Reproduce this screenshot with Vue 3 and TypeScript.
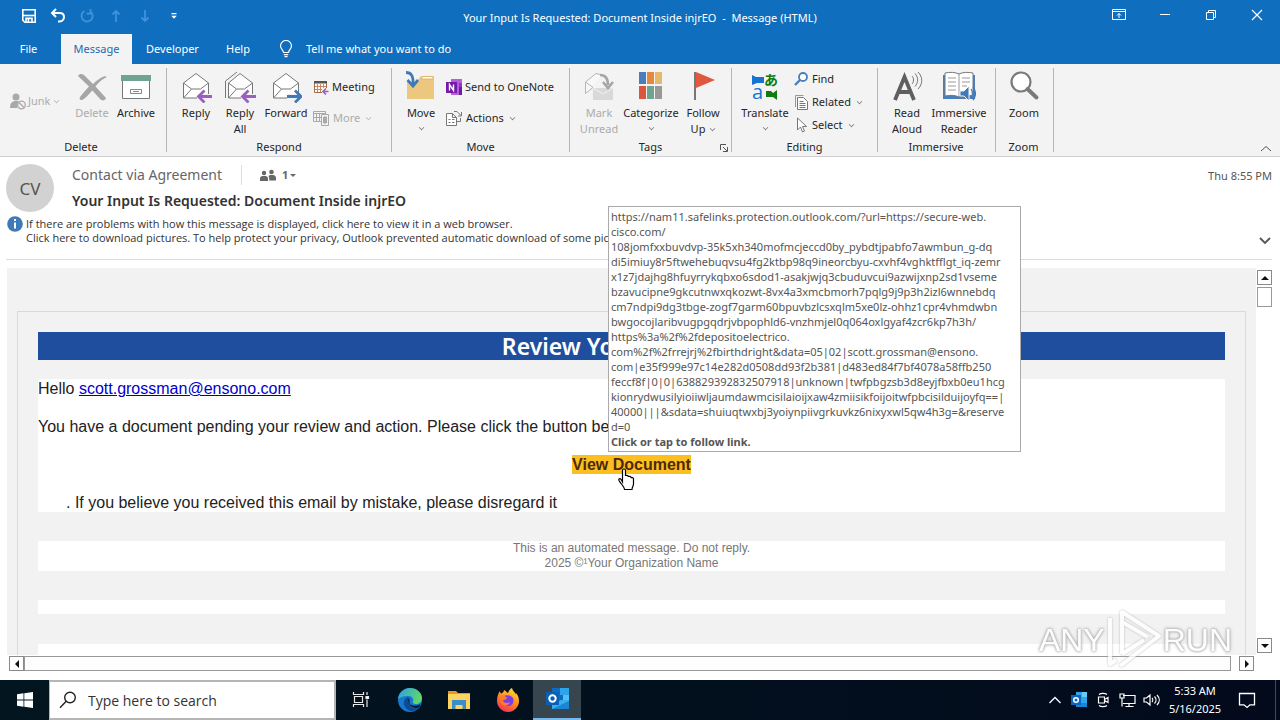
<script setup lang="ts">
import { ref } from 'vue'

const tellMe = ref('')
const search = ref('')

const tooltipLines: string[] = [
  'https://nam11.safelinks.protection.outlook.com/?url=https://secure-web.',
  'cisco.com/',
  '108jomfxxbuvdvp-35k5xh340mofmcjeccd0by_pybdtjpabfo7awmbun_g-dq',
  'di5imiuy8r5ftwehebuqvsu4fg2ktbp98q9ineorcbyu-cxvhf4vghktfflgt_iq-zemr',
  'x1z7jdajhg8hfuyrrykqbxo6sdod1-asakjwjq3cbuduvcui9azwijxnp2sd1vseme',
  'bzavucipne9gkcutnwxqkozwt-8vx4a3xmcbmorh7pqlg9j9p3h2izl6wnnebdq',
  'cm7ndpi9dg3tbge-zogf7garm60bpuvbzlcsxqlm5xe0lz-ohhz1cpr4vhmdwbn',
  'bwgocojlaribvugpgqdrjvbpophld6-vnzhmjel0q064oxlgyaf4zcr6kp7h3h/',
  'https%3a%2f%2fdepositoelectrico.',
  'com%2f%2frrejrj%2fbirthdright&data=05|02|scott.grossman@ensono.',
  'com|e35f999e97c14e282d0508dd93f2b381|d483ed84f7bf4078a58ffb250',
  'feccf8f|0|0|638829392832507918|unknown|twfpbgzsb3d8eyjfbxb0eu1hcg',
  'kionrydwusilyioiiwljaumdawmcisilaioijxaw4zmiisikfoijoitwfpbcisilduijoyfq==|',
  '40000|||&sdata=shuiuqtwxbj3yoiynpiivgrkuvkz6nixyxwl5qw4h3g=&reserve',
  'd=0',
]
</script>

<template>
  <div class="screen">
    <header class="titlebar">
      <div class="caption">
        <div class="qat">
          <button aria-label="Save">
            <svg width="16" height="16" viewBox="0 0 16 16" fill="none" stroke="#fff" stroke-width="1.6">
              <path d="M1.8 1.8h12.4v12.4H3.8l-2-2z" /><path d="M2 7.5h12" /><path d="M5 14v-3.6h6V14M7.4 11v3" />
            </svg>
          </button>
          <button aria-label="Undo">
            <svg width="16" height="16" viewBox="0 0 16 16" fill="none" stroke="#fff" stroke-width="2">
              <path d="M6 1L2 5l4 4M2.4 5h7.2c3 0 4.4 1.8 4.4 4s-1.600 4.400-4.400 4.400H8" />
            </svg>
          </button>
          <button aria-label="Redo">
            <svg width="16" height="16" viewBox="0 0 16 16" fill="none" stroke="#3f92dc" stroke-width="1.800">
              <path d="M5.500 3A5.600 5.600 0 1 0 11 3.200M11.500 1v4.600H7.500" />
            </svg>
          </button>
          <button aria-label="Previous item">
            <svg width="16" height="16" viewBox="0 0 16 16" fill="none" stroke="#3f92dc" stroke-width="1.800">
              <path d="M8 14V3M4.500 6.500L8 3l3.500 3.500" />
            </svg>
          </button>
          <button aria-label="Next item">
            <svg width="16" height="16" viewBox="0 0 16 16" fill="none" stroke="#3f92dc" stroke-width="1.800">
              <path d="M8 2v11M4.500 9.500L8 13l3.500-3.500" />
            </svg>
          </button>
          <button aria-label="Customize toolbar">
            <svg width="8" height="8" viewBox="0 0 8 8" fill="#fff"><path d="M1.500 1h5v1.200h-5zM1.200 3.800h5.600L4 6.800z" /></svg>
          </button>
        </div>
        <h1>Your Input Is Requested: Document Inside injrEO&nbsp; -&nbsp; Message (HTML)</h1>
        <div class="winctl">
          <button aria-label="Ribbon display options">
            <svg width="14" height="12" viewBox="0 0 14 12" fill="none" stroke="#fff"><path d="M.5.5h13v10H.5zM.5 2.500h13M7 9V4.500M5 6.500l2-2 2 2" /></svg>
          </button>
          <button aria-label="Minimize">
            <svg width="12" height="12" viewBox="0 0 12 12" fill="none" stroke="#fff"><path d="M1 5.500h10" /></svg>
          </button>
          <button aria-label="Restore">
            <svg width="12" height="12" viewBox="0 0 12 12" fill="none" stroke="#fff"><path d="M1.500 3.500h7v7h-7zM3.500 3.500v-2h7v7h-2" /></svg>
          </button>
          <button aria-label="Close">
            <svg width="12" height="12" viewBox="0 0 12 12" fill="none" stroke="#fff" stroke-width="1.200"><path d="M1 1l10 10M11 1L1 11" /></svg>
          </button>
        </div>
      </div>
      <nav class="tabs">
        <button class="tab file">File</button>
        <button class="tab message">Message</button>
        <button class="tab developer">Developer</button>
        <button class="tab help">Help</button>
        <label class="tell">
          <svg width="14" height="18" viewBox="0 0 14 18" fill="none" stroke="#fff" stroke-width="1.200">
            <path d="M4.500 12.500c0-2.500-3-3.500-3-6.500a5.500 5.500 0 0 1 11 0c0 3-3 4-3 6.500zM4.800 14.600h4.400M5.500 16.600h3" />
          </svg>
          <input v-model="tellMe" placeholder="Tell me what you want to do" aria-label="Tell me what you want to do" />
        </label>
      </nav>
    </header>

    <section class="ribbon">
      <div class="group g-delete">
        <div class="tools">
          <button class="small junk off">
            <svg width="17" height="17" viewBox="0 0 17 17" fill="#a9a9a9">
              <circle cx="6" cy="4" r="3.500" /><path d="M0 15c0-5 2-7 6-7 2 0 3 .5 3.800 1.200C7 10.500 7 13 7.500 15z" />
              <circle cx="11.500" cy="12" r="3.800" fill="#f2f2f2" stroke="#a9a9a9" stroke-width="1.300" /><path d="M9 9.500l5 5" stroke="#a9a9a9" stroke-width="1.300" />
            </svg>Junk<i class="arrow"></i>
          </button>
          <button class="big w44 off">
            <svg width="32" height="32" viewBox="0 0 32 32" fill="#a6a6a6">
              <path d="M2 5c2-3 5-2 7 0l8 8c4-4 8-7 13-8 .5 1 0 2-1 2-4 2-7 5-9.500 8.500L30 27c-1 3-4 3-6 1l-7.500-8.500C13 23 9 28 6 29c-2 .5-3-1-2-3 3-4 6-7.500 9-10.500z" />
            </svg><span>Delete</span>
          </button>
          <button class="big w44">
            <svg width="32" height="32" viewBox="0 0 32 32">
              <path d="M2.500 9h27v18.500h-27z" fill="#fff" stroke="#777" /><path d="M1 4h30v6H1z" fill="#6fa590" />
              <path d="M10.500 18.500h11v4h-11zM13 20.500h6" fill="none" stroke="#888" />
            </svg><span>Archive</span>
          </button>
        </div>
        <div class="name">Delete</div>
      </div>

      <div class="group g-respond">
        <div class="tools">
          <button class="big w44">
            <svg width="32" height="32" viewBox="0 0 32 32" fill="none">
              <path d="M3.500 12L16 2.500 28.500 12v15h-25z" fill="#fff" stroke="#777" /><path d="M3.500 12l8 6h9l8-6M3.500 27l8-9" stroke="#777" />
              <path d="M17 23h15v8H17z" fill="#f2f2f2" /><path d="M32 25.500H18.500M24.500 19.500l-6 6 6 6" stroke="#9a5fc0" stroke-width="2.800" />
            </svg><span>Reply</span>
          </button>
          <button class="big w44">
            <svg width="32" height="32" viewBox="0 0 32 32" fill="none">
              <path d="M1.500 27V10L13 1" stroke="#777" /><path d="M4.500 12L16 2.500 28.500 12v15h-24z" fill="#fff" stroke="#777" /><path d="M4.500 12l8 6h8l8-6M4.500 27l8-9" stroke="#777" />
              <path d="M17 23h15v8H17z" fill="#f2f2f2" /><path d="M32 25.500H18.500M24.500 19.500l-6 6 6 6" stroke="#9a5fc0" stroke-width="2.800" />
            </svg><span>Reply<br />All</span>
          </button>
          <button class="big w48">
            <svg width="32" height="32" viewBox="0 0 32 32" fill="none">
              <path d="M3.500 12L16 2.500 28.500 12v15h-25z" fill="#fff" stroke="#777" /><path d="M3.500 12l8 6h9l8-6M3.500 27l8-9" stroke="#777" />
              <path d="M17 23h15v8H17z" fill="#f2f2f2" /><path d="M17 25.500h13.500M25 19.500l6 6-6 6" stroke="#3f7ab8" stroke-width="2.800" />
            </svg><span>Forward</span>
          </button>
          <div class="stack two">
            <button class="small">
              <svg width="16" height="16" viewBox="0 0 16 16" fill="none">
                <path d="M1.500 3.500h12v10h-12z" fill="#fff" stroke="#a56a45" /><path d="M1 2h13v2.500H1z" fill="#555" /><path d="M4.500 5v8M7.500 5v8M10.500 5v4M2 7.500h11M2 10.500h7" stroke="#c98a63" />
                <path d="M9 9h7v7H9z" fill="#f2f2f2" /><path d="M15.500 12.500h-5M13 9.500l-3 3 3 3" stroke="#9a5fc0" stroke-width="1.600" />
              </svg>Meeting
            </button>
            <button class="small off">
              <svg width="17" height="16" viewBox="0 0 17 16" fill="none" stroke="#a9a9a9">
                <path d="M.5 1.500h12v10H.5zM.5 3.500h12M3.500 4v7M6.500 4v7M1 7.500h7" /><path d="M8.500 4.500h7v11h-7z" fill="#f2f2f2" /><path d="M10.500 7h3v6h-3z" fill="#a9a9a9" />
              </svg>More<i class="arrow"></i>
            </button>
          </div>
        </div>
        <div class="name">Respond</div>
      </div>

      <div class="group g-move">
        <div class="tools">
          <button class="big w44">
            <svg width="32" height="32" viewBox="0 0 32 32" fill="none">
              <path d="M2 28V11h9l5-6h13v23z" fill="#ecc780" /><path d="M18 5.500h10V8H16z" fill="#fff" stroke="#ddb66c" />
              <path d="M1 1.500c5 0 7.500 3 7 12M2.500 9l5.500 6 5-6" stroke="#3f7ab8" stroke-width="2.800" />
            </svg><span>Move</span><i class="arrow"></i>
          </button>
          <div class="stack two">
            <button class="small">
              <svg width="16" height="16" viewBox="0 0 16 16">
                <path d="M5 0h11v16H5z" fill="#b65fd6" /><path d="M13 4h3v4h-3z" fill="#8c3bc0" /><path d="M13 8h3v8h-3z" fill="#6a1f9c" /><path d="M0 3h11v11H0z" fill="#7719aa" />
                <path d="M3.500 11.500v-6l4 6v-6" fill="none" stroke="#fff" stroke-width="1.400" />
              </svg>Send to OneNote
            </button>
            <button class="small">
              <svg width="17" height="16" viewBox="0 0 17 16" fill="none" stroke="#777">
                <path d="M.5 3.500h6l4 4v8H.5zM6.500 3.500v4h4" fill="#fff" /><path d="M2.500 9.500h2M6 9.500h2.500M2.500 12.500h2M6 12.500h2.500M8 1.500h3l4 4M15.500 2v4H12M11 11.500h3.500V8" />
              </svg>Actions<i class="arrow"></i>
            </button>
          </div>
        </div>
        <div class="name">Move</div>
      </div>

      <div class="group g-tags">
        <div class="tools">
          <button class="big w44 off">
            <svg width="32" height="32" viewBox="0 0 32 32" fill="none" stroke="#b5b5b5">
              <path d="M2.500 22.500V11L13 2.500l6 1.500M2.500 11L10 16.500M2.500 22.500L10 16.500" fill="#f8f8f8" /><path d="M10 17h20v12H10z" fill="#d9d9d9" stroke="none" /><path d="M10 17l10 6 10-6" stroke="#f2f2f2" />
              <path d="M17 4c6 0 8 4 8 10M20 11l5 6 5-6" stroke="#a6a6a6" stroke-width="2.600" />
            </svg><span>Mark<br />Unread</span>
          </button>
          <button class="big w60">
            <svg width="24" height="32" viewBox="0 0 24 32">
              <path d="M0 1h7v12H0z" fill="#4a7ebb" /><path d="M8 1h7v12H8z" fill="#e58a3c" /><path d="M16 1h7v12h-7z" fill="#e5b96e" />
              <path d="M0 15h7v13H0z" fill="#d9573c" /><path d="M8 15h7v13H8z" fill="#6fa590" /><path d="M16 15h7v13h-7z" fill="#999" />
            </svg><span>Categorize</span><i class="arrow"></i>
          </button>
          <button class="big w44">
            <svg width="24" height="32" viewBox="0 0 24 32"><path d="M5 1l19 8-19 8z" fill="#e0593e" /><path d="M3 1h2v28H3z" fill="#777" /></svg>
            <span>Follow<br />Up<i class="arrow inline"></i></span>
          </button>
        </div>
        <div class="name">Tags</div>
        <button class="launcher" aria-label="Tag options">
          <svg width="8" height="8" viewBox="0 0 8 8" fill="none" stroke="#555"><path d="M.5 6V.5H6M3 3l4 4M7.500 3v4.500H3" /></svg>
        </button>
      </div>

      <div class="group g-editing">
        <div class="tools">
          <button class="big w52">
            <svg class="translate" width="28" height="32" viewBox="0 0 28 32" fill="none">
              <path d="M1 4l4 2h8v6H6l-5 2z" fill="#1674d1" /><path d="M26 19v10l-4-3h-7v-6h5l2 2z" fill="#107c10" />
              <text x="1" y="28" class="glyph-a">a</text><text x="13" y="14" class="glyph-jp">あ</text>
            </svg><span>Translate</span><i class="arrow"></i>
          </button>
          <div class="stack three">
            <button class="small">
              <svg width="15" height="15" viewBox="0 0 15 15" fill="none" stroke="#4a7ebb"><circle cx="9" cy="5" r="4" fill="#fff" stroke-width="1.800" /><path d="M6 8l-5 5" stroke-width="2.400" /></svg>Find
            </button>
            <button class="small">
              <svg width="15" height="16" viewBox="0 0 15 16" fill="none"><path d="M1.500 13V1.500h8" stroke="#d08a4a" /><path d="M3.500 3.500h6l4 4v8h-10z" fill="#fff" stroke="#777" /><path d="M5.500 7.500h4M5.500 9.500h6M5.500 11.500h6M5.500 13.500h6" stroke="#777" /></svg>Related<i class="arrow"></i>
            </button>
            <button class="small">
              <svg width="15" height="16" viewBox="0 0 15 16"><path d="M3.500 1v12l3-3 2 5 2-1-2-4.500h4z" fill="#fff" stroke="#777" /></svg>Select<i class="arrow"></i>
            </button>
          </div>
        </div>
        <div class="name">Editing</div>
      </div>

      <div class="group g-immersive">
        <div class="tools">
          <button class="big w46">
            <svg width="32" height="32" viewBox="0 0 32 32" fill="none">
              <path d="M4 29L13.500 6 23 29M7.500 21h12" stroke="#5f5f5f" stroke-width="3.800" />
              <path d="M21 5c2 2 2 6 0 8M24 2.500c3.500 4 3.500 9 0 13M27 1c5 5 5 12 0 17" stroke="#777" />
            </svg><span>Read<br />Aloud</span>
          </button>
          <button class="big w58">
            <svg width="34" height="32" viewBox="0 0 34 32" fill="none">
              <path d="M1 4h32v24H1z" fill="#4a7ebb" /><path d="M3 2c5-1 10-1 14 1 4-2 9-2 14-1v23c-5-1-10-1-14 1-4-2-9-2-14-1z" fill="#fff" stroke="#777" />
              <path d="M17 3v23M6 7h8M6 11h8M6 15h8M6 19h8M20 7h8M20 11h8M20 15h5" stroke="#999" />
              <path d="M18 20h4l5-5v15l-5-5h-4z" fill="#3f7ab8" stroke="#f2f2f2" /><path d="M29 18c2 3 2 6 0 9M31 16c3 4 3 9 0 13" stroke="#3f7ab8" stroke-width="1.300" />
            </svg><span>Immersive<br />Reader</span>
          </button>
        </div>
        <div class="name">Immersive</div>
      </div>

      <div class="group g-zoom">
        <div class="tools">
          <button class="big w46">
            <svg width="32" height="32" viewBox="0 0 32 32" fill="none" stroke="#7a7a7a"><circle cx="13" cy="11" r="9.500" fill="#fff" stroke-width="2.200" /><path d="M19.500 18l9 8.500" stroke-width="4" stroke-linecap="round" /></svg><span>Zoom</span>
          </button>
        </div>
        <div class="name">Zoom</div>
      </div>
      <button class="collapse" aria-label="Collapse ribbon">
        <svg width="12" height="7" viewBox="0 0 12 7" fill="none" stroke="#555"><path d="M1 6l5-4.500L11 6" /></svg>
      </button>
    </section>

    <section class="msghead">
      <div class="who">
        <div class="avatar">CV</div>
        <div class="lines">
          <div class="from">
            <span class="sender">Contact via Agreement</span>
            <button class="people">
              <svg width="16" height="13" viewBox="0 0 16 13" fill="#666">
                <circle cx="4" cy="4" r="2.200" /><path d="M0 12V9.500C0 7.500 1.500 7 4 7s4 .5 4 2.500V12z" /><circle cx="11.500" cy="3" r="2.300" /><path d="M8.500 7c.6-.8 1.600-1 3-1C14 6 16 6.500 16 9v2.500H9.200V9z" />
              </svg><b>1</b><i class="tri"></i>
            </button>
          </div>
          <h2>Your Input Is Requested: Document Inside injrEO</h2>
        </div>
        <time>Thu 8:55 PM</time>
      </div>
      <div class="infobar">
        <svg width="16" height="16" viewBox="0 0 16 16"><circle cx="8" cy="8" r="7.800" fill="#3f7ab8" /><path d="M7 6.500h2v6H7zM7 3h2v2H7z" fill="#fff" /></svg>
        <p>If there are problems with how this message is displayed, click here to view it in a web browser.<br />Click here to download pictures. To help protect your privacy, Outlook prevented automatic download of some pictures in this message.</p>
        <button aria-label="Expand header">
          <svg width="12" height="8" viewBox="0 0 12 8" fill="none" stroke="#555" stroke-width="1.800"><path d="M1 1l5 5 5-5" /></svg>
        </button>
      </div>
    </section>

    <main class="reader">
      <div class="viewport">
        <article class="mail">
          <h3>Review Your Document</h3>
          <div class="sheet letter">
            <p>Hello <a href="#">scott.grossman@ensono.com</a></p>
            <p>You have a document pending your review and action. Please click the button below.</p>
            <p class="cta">
              <a href="#">View Document<svg class="pointer" width="18" height="23" viewBox="0 0 18 23">
                <path d="M5.500 14V2.500c0-2 3-2 3 0V8c0-1 2.800-1 2.800.5V9c0-1 2.800-.8 2.800.6v.6c.2-1 2.400-.8 2.400.8v5c0 2-1.500 3-1.500 5.500H7.500C7.500 19 4 16 2 12.500c-.8-1.500.8-2.500 2-1.200z" fill="#fff" stroke="#000" stroke-width="1.200" />
              </svg></a>
            </p>
            <p class="note">. If you believe you received this email by mistake, please disregard it</p>
          </div>
          <div class="sheet foot">This is an automated message. Do not reply.<br />2025 ©¹Your Organization Name</div>
          <div class="sheet thin"></div>
          <div class="sheet last"></div>
        </article>
      </div>
      <div class="vscroll">
        <button aria-label="Scroll up"><i class="up"></i></button>
        <div class="vthumb"></div>
        <button aria-label="Scroll down"><i class="down"></i></button>
      </div>
    </main>
    <div class="hscroll">
      <button aria-label="Scroll left"><i class="left"></i></button>
      <div class="htrack"></div>
      <button aria-label="Scroll right"><i class="right"></i></button>
    </div>

    <div class="tooltip" role="tooltip">
      <div v-for="line in tooltipLines" :key="line">{{ line }}</div>
      <strong>Click or tap to follow link.</strong>
    </div>

    <div class="watermark">
      <span>ANY</span>
      <svg width="58" height="64" viewBox="0 0 58 64" fill="none" stroke="#fff" stroke-width="4" stroke-linejoin="round">
        <path d="M17 46V4l37 24-39 30M17 14l26 15M5 10v46l6-4M17 46l22-14" />
      </svg>
      <span>RUN</span>
    </div>

    <footer class="taskbar">
      <button class="start" aria-label="Start">
        <svg width="16" height="16" viewBox="0 0 16 16" fill="#fff"><path d="M0 2.200l6.500-.9v6.300H0zM7.300 1.200L16 0v7.600H7.300zM0 8.400h6.500v6.300L0 13.800zM7.300 8.400H16V16l-8.700-1.200z" /></svg>
      </button>
      <label class="search">
        <svg width="18" height="18" viewBox="0 0 18 18" fill="none" stroke="#222" stroke-width="1.400"><circle cx="11" cy="6.500" r="5.300" /><path d="M7.200 10.300L1 16.800" /></svg>
        <input v-model="search" placeholder="Type here to search" aria-label="Type here to search" />
      </label>
      <button class="app" aria-label="Task view">
        <svg width="18" height="18" viewBox="0 0 18 18" fill="none" stroke="#e8e8e8" stroke-width="1.200"><path d="M1.500 1v2.500h10V1M2.500 5.500h8v6h-8zM1.500 16v-2.500h10V16M15 1v3M15 8.500V16" /><path d="M14 5.500h2.500v2H14z" fill="#fff" /></svg>
      </button>
      <button class="app" aria-label="Edge">
        <svg width="26" height="26" viewBox="0 0 26 26">
          <defs><linearGradient id="edgeTop" x1="0" y1="0" x2="1" y2=".4"><stop offset="0" stop-color="#2a9fe8" /><stop offset="1" stop-color="#5fd66c" /></linearGradient></defs>
          <circle cx="13" cy="13" r="12" fill="#1579cf" />
          <path d="M1 12C2 5 7 1 13 1c7 0 12 5 12 10 0 4-3 6-6 6-2 0-4-1-3-2.500 1-2 0-5-4-5.500-5-.5-9 1-11 3z" fill="url(#edgeTop)" />
          <path d="M11 10c-5 1-6 9 0 13 4 2 8 1 11-2-4 1-8 0-9-4-1-2 0-3-.5-5z" fill="#0f4a96" />
          <path d="M12.500 11c-2 2-1 6 2 7 3 1.500 6 1 9-1-.3 1-1 2.500-1.800 3.600-4 1-8-.5-9-3.800-.7-2-.7-4-.2-5.800z" fill="#03131e" />
        </svg>
      </button>
      <button class="app" aria-label="File Explorer">
        <svg width="24" height="22" viewBox="0 0 24 22"><path d="M1 2h8l2 2h12v6H1z" fill="#e69a23" /><path d="M1 5h22v15H1z" fill="#fcd462" /><path d="M5 11h14v9h-3.500v-4h-7v4H5z" fill="#3c8ec9" /></svg>
      </button>
      <button class="app" aria-label="Firefox">
        <svg width="26" height="26" viewBox="0 0 26 26">
          <defs><linearGradient id="fox" x1=".8" y1="0" x2=".3" y2="1"><stop offset="0" stop-color="#ffe23d" /><stop offset=".5" stop-color="#ff8a1f" /><stop offset="1" stop-color="#f0305c" /></linearGradient></defs>
          <path d="M5 4c0 1 .5 2 1 2.500C7.500 6 9 5 9 3c2 1 3 2.500 4 3 1-2.500 2-4 4-5 .5 3 3 4 4 6.500V6c2 2 3 5 3 8 0 6-5 11-11 11S2 20 2 14c0-4 1-7.500 3-10z" fill="url(#fox)" />
          <path d="M9 9c2-1.500 7-1 9 2 1.500 3 0 8-5 8-3.500 0-6-3-5-6l4-1z" fill="#7b3fe0" /><path d="M5 9c3-1 6 0 7 2-2 0-2.500 2-4 2.500C9 17 14 16 15 15c-1 4-6 5-9 1-1.500-2-1.500-5-1-7z" fill="#ff7a2a" />
        </svg>
      </button>
      <button class="app active" aria-label="Outlook">
        <svg width="25" height="24" viewBox="0 0 25 24">
          <path d="M7 1h17v21H7z" fill="#0f6cbd" /><path d="M15 1h9v7h-9z" fill="#2ea4ea" /><path d="M18 8h6v8h-6z" fill="#4fc3f5" /><path d="M7 17l9-4 8 0v9H7z" fill="#38b0ee" /><path d="M7 22l17-8v8z" fill="#1b86d3" />
          <path d="M1 5h13v13H1z" fill="#0a5fb5" /><circle cx="7.500" cy="11.500" r="3.200" fill="none" stroke="#fff" stroke-width="2" />
        </svg>
      </button>
      <div class="tray">
        <button aria-label="Show hidden icons"><svg width="14" height="8" viewBox="0 0 14 8" fill="none" stroke="#fff" stroke-width="1.300"><path d="M1.500 7L7 1.500 12.500 7" /></svg></button>
        <button aria-label="Outlook status">
          <svg width="16" height="16" viewBox="0 0 16 16"><path d="M5 0h11v15H5z" fill="#2ea4ea" /><path d="M11 0h5v5h-5z" fill="#63cdf8" /><path d="M5 11h11v4H5z" fill="#1b86d3" /><path d="M0 3h10v10H0z" fill="#0a66c2" /><circle cx="5" cy="8" r="2.300" fill="none" stroke="#fff" stroke-width="1.500" /></svg>
        </button>
        <button aria-label="Meet now"><svg width="14" height="16" viewBox="0 0 14 16" fill="none" stroke="#fff" stroke-width="1.200"><path d="M3 2.500c2-1.500 6-1.500 8 0M3 13.500c2 1.500 6 1.500 8 0M2.500 5h6v6h-6zM8.500 7.500L12 5.500v5l-3.500-2" /></svg></button>
        <button aria-label="Network"><svg width="17" height="15" viewBox="0 0 17 15" fill="none" stroke="#fff" stroke-width="1.200"><path d="M4 2.500h12v8H4M10 10.500v3M6.500 13.500h8M1 1h4v4H1zM3 5v8.500" /></svg></button>
        <button aria-label="Volume"><svg width="17" height="14" viewBox="0 0 17 14" fill="none" stroke="#fff" stroke-width="1.200"><path d="M1 5h2.500L7 2v10L3.500 9H1zM9 5c1 1 1 3 0 4M11.500 3.500c2 2 2 5 0 7M14 2c3 3 3 7 0 10" /></svg></button>
        <div class="clock">5:33 AM<br />5/16/2025</div>
        <button class="notify" aria-label="Notifications"><svg width="18" height="17" viewBox="0 0 18 17" fill="none" stroke="#fff" stroke-width="1.300"><path d="M1.500 1.500h15v11.300h-4.500L9 15.500l-3-2.700H1.500z" /></svg></button>
      </div>
    </footer>
  </div>
</template>

<style>
body { margin: 0; }
</style>

<style scoped>
* { box-sizing: border-box; }
.screen {
  position: relative; height: 100vh; display: flex; flex-direction: column; overflow: hidden; background: #fff;
  font-family: "Noto Sans", "Open Sans", sans-serif; font-size: 11px; line-height: 16px; color: #262626;
}
button { font: inherit; color: inherit; background: none; border: 0; padding: 0; margin: 0; }
input { font: inherit; color: inherit; background: none; border: 0; padding: 0; outline: 0; min-width: 0; }
h1, h2, h3, p { margin: 0; font: inherit; }
svg { flex: none; display: block; }

.titlebar { flex: none; background: #106ebe; color: #fff; }
.caption { height: 34px; display: grid; grid-template-columns: 1fr auto 1fr; }
.qat { display: flex; padding-left: 14px; height: 32px; }
.qat button { width: 29px; display: flex; align-items: center; justify-content: center; }
.caption h1 { line-height: 35px; }
.winctl { display: flex; justify-content: flex-end; }
.winctl button { width: 46px; height: 30px; display: flex; align-items: center; justify-content: center; }
.tabs { height: 30px; display: flex; }
.tab.file { width: 61px; padding-right: 4px; }
.tab.message { width: 71px; background: #f3f3f3; color: #1f68b0; }
.tab.developer { width: 81px; }
.tab.help { width: 50px; }
.tell { display: flex; align-items: center; gap: 13px; padding-left: 16px; }
.tell input { width: 200px; }
.tell input::placeholder { color: #fff; opacity: 1; }

.ribbon { flex: none; height: 93px; display: flex; background: #f3f3f3; border-bottom: 1px solid #cfcfcf; }
.group { position: relative; flex: none; display: flex; flex-direction: column; margin: 4px 0; border-right: 1px solid #b5b5b5; }
.g-delete { width: 167px; padding-left: 10px; }
.g-respond { width: 225px; padding-left: 7px; }
.g-move { width: 178px; padding-left: 7px; }
.g-tags { width: 162px; padding-left: 7px; }
.g-editing { width: 146px; padding-left: 7px; }
.g-immersive { width: 118px; padding-left: 6px; }
.g-zoom { width: 58px; padding-left: 5px; }
.tools { display: flex; height: 73px; }
.name { line-height: 14px; text-align: center; margin: 0 7px 0 0; }
.g-delete .name { margin-right: 14px; }
.big { display: flex; flex-direction: column; align-items: center; justify-content: flex-start; gap: 2px; text-align: center; padding-top: 3px; height: 72px; white-space: nowrap; }
.w44 { width: 44px; } .w46 { width: 46px; } .w48 { width: 48px; } .w52 { width: 52px; } .w58 { width: 58px; } .w60 { width: 60px; }
.small { display: flex; align-items: center; gap: 3px; height: 22px; white-space: nowrap; }
.junk { width: 60px; gap: 1px; margin-top: 22px; }
.off { color: #ababab; }
.stack { display: flex; flex-direction: column; padding-left: 3px; }
.two { gap: 9px; padding-top: 8px; }
.three { gap: 1px; }
.arrow { display: block; width: 5px; height: 5px; margin: 2px auto 0; border: solid #777; border-width: 0 1px 1px 0; transform: rotate(45deg) scale(.8); }
.small .arrow { margin: 0 0 2px 3px; }
.arrow.inline { display: inline-block; margin: 0 0 2px 5px; }
.off .arrow { border-color: #b5b5b5; }
.translate { overflow: visible; }
.glyph-a { font: 20px "Open Sans", sans-serif; fill: #1674d1; }
.glyph-jp { font: bold 14px "Noto Sans CJK JP", sans-serif; fill: #107c10; }
.launcher { position: absolute; right: 3px; bottom: 0; }
.collapse { margin: auto 8px 4px auto; }

.msghead { flex: none; height: 103px; margin: 0 8px 0 6px; padding-top: 7px; border-bottom: 1px solid #dcdcdc; }
.who { display: flex; }
.avatar { width: 48px; height: 48px; border-radius: 50%; background: #d2d2d2; color: #555; font-size: 17px; line-height: 49px; text-align: center; }
.lines { margin-left: 18px; }
.from { display: flex; align-items: center; height: 22px; color: #666; }
.sender { font-size: 14px; padding-right: 19px; border-right: 1px solid #ddd; line-height: 20px; }
.people { display: flex; align-items: center; gap: 4px; margin-left: 18px; }
.people b { margin-left: 2px; }
.tri { border: 3px solid transparent; border-top-color: #666; border-bottom: 0; margin-left: -2px; }
.lines h2 { font-size: 14px; font-weight: 600; line-height: 30px; color: #333; white-space: nowrap; }
time { margin-left: auto; padding-top: 4px; color: #555; }
.infobar { display: flex; align-items: flex-start; gap: 3px; }
.infobar svg { margin-left: 1px; }
.infobar p { flex: 1; padding-top: 1px; line-height: 14px; font-family: "Open Sans", sans-serif; color: #333; }
.infobar button { align-self: flex-end; padding: 0 1px 0 0; }

.reader { flex: 1; min-height: 0; display: flex; margin: 8px 8px 0 7px; }
.viewport { flex: 1; overflow: hidden; background: #f2f2f2; font-family: "Liberation Sans", Arial, sans-serif; }
.mail { margin: 43px 10px 0; padding: 20px; border: 1px solid #dadada; }
.mail h3 { background: #1f4e9f; color: #fff; font: 600 23px/28px "Noto Sans", "Open Sans", sans-serif; text-align: center; }
.sheet { background: #fff; }
.letter { margin-top: 19px; font-size: 16px; line-height: 19px; display: flex; flex-direction: column; gap: 19px; color: #222; }
.letter a { color: #00c; }
.cta { text-align: center; }
.letter .cta a { position: relative; display: inline-block; background: #fdbf1f; color: #4a2a0a; font-weight: bold; text-decoration: none; }
.pointer { position: absolute; left: 45px; top: 13px; }
.letter .note { padding-left: 28px; }
.foot { margin-top: 29px; font-size: 12px; line-height: 15px; text-align: center; color: #777; }
.thin { margin-top: 29px; height: 14px; }
.last { margin-top: 30px; height: 40px; }
.vscroll { width: 15px; margin-left: 1px; display: flex; flex-direction: column; padding: 2px 0; }
.vscroll button, .hscroll button { flex: none; width: 15px; height: 15px; border: 1px solid #8a8a8a; background: #fff; display: flex; align-items: center; justify-content: center; }
.vthumb { height: 20px; margin: 2px 0 auto; border: 1px solid #999; }
.up { border: 4px solid transparent; border-bottom-color: #111; border-top: 0; }
.down { border: 4px solid transparent; border-top-color: #111; border-bottom: 0; }
.left { border: 4px solid transparent; border-right-color: #111; border-left: 0; }
.right { border: 4px solid transparent; border-left-color: #111; border-right: 0; }
.hscroll { flex: none; display: flex; margin: 1px 26px 9px 9px; }
.htrack { flex: 1; border: 1px solid #999; margin-right: 8px; background: #fdfdfd; }

.tooltip { position: absolute; left: 608px; top: 206px; width: 413px; padding: 2px; border: 1px solid #aaa; background: #fff; color: #555; line-height: 15px; white-space: nowrap; }
.tooltip strong { display: block; }
.watermark { position: absolute; right: 48px; bottom: 48px; display: flex; align-items: center; opacity: .8; color: #fff; font: 32px/64px "Liberation Sans", sans-serif; text-shadow: 0 0 3px #999; filter: drop-shadow(0 0 1px #aaa); pointer-events: none; }

.taskbar { flex: none; height: 40px; display: flex; background: linear-gradient(90deg, #02161f, #020a1c); color: #fff; }
.start { width: 49px; display: flex; align-items: center; justify-content: center; }
.search { width: 287px; display: flex; align-items: center; gap: 11px; padding-left: 9px; background: #fff; border: 2px solid #b5b5b5; border-left-width: 1px; color: #333; }
.search input { font: 14px "Open Sans", sans-serif; flex: 1; }
.search input::placeholder { color: #333; opacity: 1; }
.app { width: 49px; display: flex; align-items: center; justify-content: center; }
.app.active { background: #36454e; border-bottom: 2px solid #76b9ed; margin-left: 1px; width: 48px; }
.tray { margin-left: auto; display: flex; align-items: center; padding-right: 4px; }
.tray button { width: 24px; height: 40px; display: flex; align-items: center; justify-content: center; }
.clock { width: 64px; text-align: center; line-height: 18px; font-size: 11px; }
.tray .notify { width: 49px; padding-right: 9px; border-right: 1px solid #444b55; }
</style>
